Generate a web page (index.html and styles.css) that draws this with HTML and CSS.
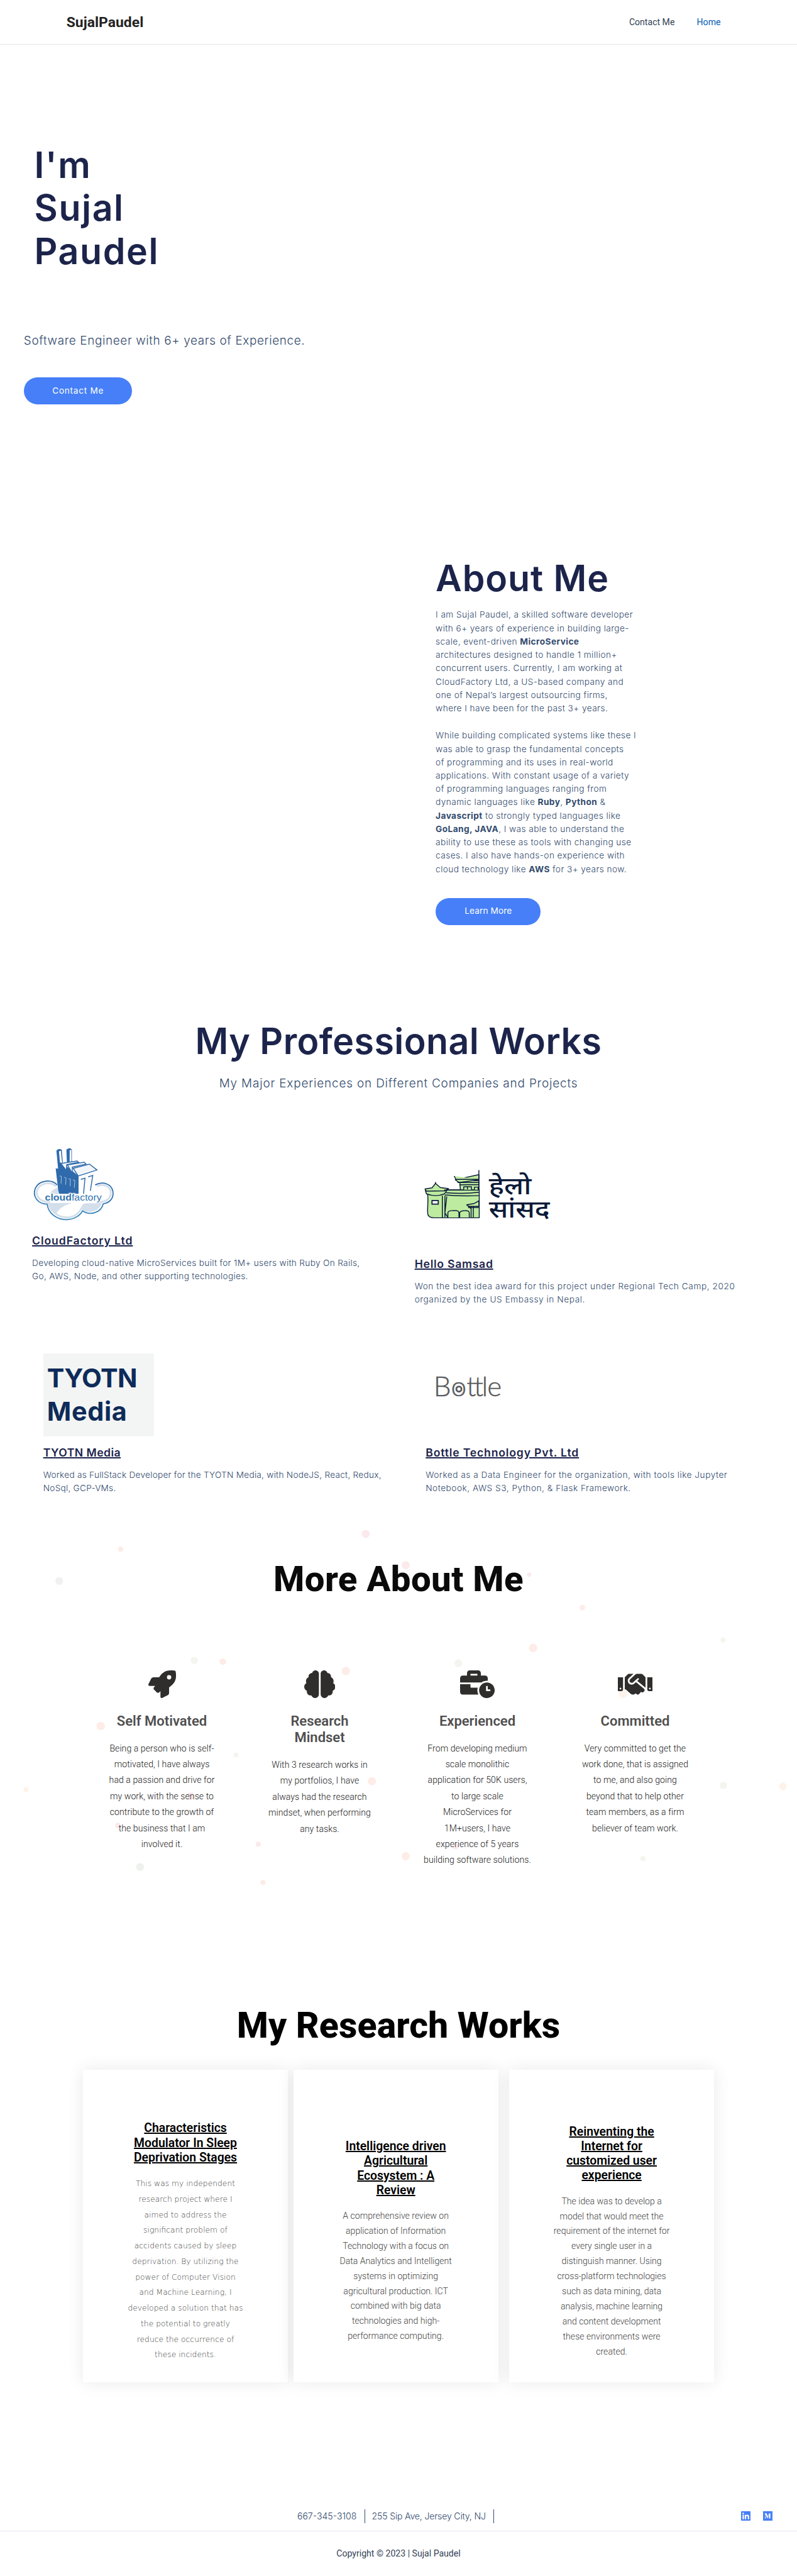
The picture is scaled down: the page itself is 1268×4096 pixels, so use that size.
FILE: index.html
```html
<!DOCTYPE html>
<html lang="en">
<head>
<meta charset="utf-8">
<title>SujalPaudel</title>
<link rel="stylesheet" href="styles.css">
</head>
<body>
<header class="site-header">
  <a class="logo">SujalPaudel</a>
  <nav class="nav"><a>Contact Me</a><a class="current">Home</a></nav>
</header>

<section class="hero">
  <h1 class="display">I'm<br>Sujal<br>Paudel</h1>
  <p class="lead">Software Engineer with 6+ years of Experience.</p>
  <a class="btn btn-contact">Contact Me</a>
</section>

<section class="about">
  <h2 class="display">About Me</h2>
  <p class="copy first">I am Sujal Paudel, a skilled software developer<br>with 6+ years of experience in building large-<br>scale, event-driven <b>MicroService</b><br>architectures designed to handle 1 million+<br>concurrent users. Currently, I am working at<br>CloudFactory Ltd, a US-based company and<br>one of Nepal’s largest outsourcing firms,<br>where I have been for the past 3+ years.</p>
  <p class="copy second">While building complicated systems like these I<br>was able to grasp the fundamental concepts<br>of programming and its uses in real-world<br>applications. With constant usage of a variety<br>of programming languages ranging from<br>dynamic languages like <b>Ruby</b>, <b>Python</b> &amp;<br><b>Javascript</b> to strongly typed languages like<br><b>GoLang, JAVA</b>, I was able to understand the<br>ability to use these as tools with changing use<br>cases. I also have hands-on experience with<br>cloud technology like <b>AWS</b> for 3+ years now.</p>
  <a class="btn btn-learn">Learn More</a>
</section>

<section class="works">
  <h2 class="display">My Professional Works</h2>
  <p class="lead">My Major Experiences on Different Companies and Projects</p>
  <div class="work-row row-one">
    <article class="work work-cloud">
      <svg class="logo-cloud" viewBox="54 36 450 450">
        <defs><linearGradient id="cg" x1="0" y1="0" x2="0" y2="1"><stop offset="0" stop-color="#2d68a8"/><stop offset="1" stop-color="#3f8cc0"/></linearGradient></defs>
        <path d="M190 268C160 236 95 240 72 285C54 330 85 372 136 372C142 425 190 456 240 456C280 456 312 436 328 408C368 436 428 420 440 370C478 364 498 338 492 302C485 264 440 246 396 262V300H190Z" fill="#fff"/>
        <path d="M190 268C160 236 95 240 72 285C54 330 85 372 136 372C142 425 190 456 240 456C280 456 312 436 328 408C368 436 428 420 440 370C478 364 498 338 492 302C485 264 440 246 396 268" fill="none" stroke="url(#cg)" stroke-width="6"/>
        <path d="M185 275C155 250 105 254 84 290C68 325 95 360 146 360C150 410 195 444 240 444C278 444 306 424 322 394C365 424 418 405 428 360C462 356 486 335 480 303C474 274 440 260 404 274" fill="none" stroke="#d3dfeb" stroke-width="10"/>
        <path d="M140 366H272C225 378 195 400 184 428C158 416 144 394 140 366ZM150 318Q165 285 195 285V318ZM330 372C318 385 320 400 335 405C370 418 415 400 425 362C395 375 350 360 330 372Z" fill="#d3dfeb"/>
        <path d="M186 82Q200 68 215 78L221 150L306 220V316H200L196 300L182 178L195 180Z" fill="#2f6bac"/>
        <path d="M240 78Q255 62 270 76V150H243Z" fill="#2f6bac"/>
        <path d="M200 86L210 82L217 150L205 145ZM258 80L267 78V146H258Z" fill="#fff"/>
        <path d="M210 152L298 138L306 145L242 158L240 190ZM246 160L336 145L347 155L272 172L272 205Z" fill="#f5f8fc" stroke="#2f6bac" stroke-width="5"/>
        <path d="M277 178L365 155L406 187L304 220Z" fill="#f2f6fb" stroke="#2f6bac" stroke-width="5"/>
        <path d="M306 222L390 196L376 316H306Z" fill="#fff"/>
        <path d="M318 238L341 232L333 316M358 224L383 217L370 300" fill="none" stroke="#2f6bac" stroke-width="5"/>
        <path d="M204 219L213 222L211 262M228 227L238 230L236 267M252 234L262 237L260 275M275 241L286 244L283 283" fill="none" stroke="#dce8f4" stroke-width="2.5"/>
        <text x="124" y="353" font-size="48" textLength="307" lengthAdjust="spacingAndGlyphs" fill="#3575ae" class="cloud-word"><tspan font-weight="700">cloud</tspan>factory</text>
      </svg>
      <h3>CloudFactory Ltd</h3>
      <p>Developing cloud-native MicroServices built for 1M+ users with Ruby On Rails,<br>Go, AWS, Node, and other supporting technologies.</p>
    </article>
    <article class="work work-samsad">
      <svg class="logo-samsad" viewBox="27 -54 780 576">
        <g fill="#bdeba0" stroke="#0c1b38" stroke-width="5" stroke-linejoin="round">
          <path d="M96 226C102 270 92 310 98 340Q105 356 130 356H376V205H180Q140 245 96 226Z"/>
          <path d="M84 208L90 226Q140 246 188 226L206 200Z"/>
          <path d="M82 200L120 194L139 170L165 192L210 198L190 210L90 212Z"/>
          <path d="M270 155H374V206H274Z"/>
          <path d="M246 150L374 122V150L268 165Z"/>
          <path d="M240 130L250 148H372M258 165H374M268 178L374 176M374 98V205M139 162V172M186 206H376M196 220Q290 228 376 218M190 232Q280 240 376 236M176 236V356M190 236V352M200 240L190 330L208 356"/>
          <path d="M292 204V188H334V204M350 204V190H370V204M312 188V202"/>
          <path d="M120 262H154V282H120Z" fill="#fff" stroke-width="6"/>
          <path d="M206 354V328Q210 316 235 317Q266 314 266 330V354M270 354V328Q275 317 298 317Q322 316 322 330V354"/>
          <path d="M308 286L350 278L374 264V294H320ZM332 296V354M344 296V354M316 300H374M308 286L330 305"/>
        </g>
        <g class="samsad-word" fill="#0c1b38">
          <text x="428" y="230" font-size="132" textLength="230" lengthAdjust="spacingAndGlyphs">हेलो</text>
          <text x="428" y="354" font-size="132" textLength="330" lengthAdjust="spacingAndGlyphs">सांसद</text>
        </g>
      </svg>
      <h3>Hello Samsad</h3>
      <p>Won the best idea award for this project under Regional Tech Camp, 2020<br>organized by the US Embassy in Nepal.</p>
    </article>
  </div>
  <div class="work-row row-two">
    <article class="work work-tyotn">
      <div class="tyotn"><span class="tyotn-name">TYOTN</span><br><span class="tyotn-media">Media</span></div>
      <h3>TYOTN Media</h3>
      <p>Worked as FullStack Developer for the TYOTN Media, with NodeJS, React, Redux,<br>NoSql, GCP-VMs.</p>
    </article>
    <article class="work work-bottle">
      <svg class="logo-bottle" viewBox="0 0 200 150">
        <text x="14.5 46 74 87.5 101.5 111.5" y="77.4" font-size="50" fill="#58595b" class="bottle-word">Bottle</text>
        <circle cx="60.3" cy="64.4" r="4.6" fill="none" stroke="#58595b" stroke-width="3.2"/>
      </svg>
      <h3>Bottle Technology Pvt. Ltd</h3>
      <p>Worked as a Data Engineer for the organization, with tools like Jupyter<br>Notebook, AWS S3, Python, &amp; Flask Framework.</p>
    </article>
  </div>
</section>

<section class="more">
  <svg class="dots" viewBox="0 2740 1440 680">
    <g fill="#fbe9eb"><circle cx="660.6" cy="2769.5" r="7.2"/><circle cx="733" cy="2826" r="7.2"/><circle cx="956" cy="2843" r="4"/><circle cx="812" cy="3113" r="4"/><circle cx="344.4" cy="3243" r="7"/><circle cx="212.8" cy="3296" r="5"/><circle cx="466.6" cy="3329.8" r="4.7"/><circle cx="823" cy="3334" r="5"/></g>
    <g fill="#fdece7"><circle cx="218" cy="2797" r="4.8"/><circle cx="1052" cy="2902.6" r="5"/><circle cx="963" cy="2975.5" r="7.5"/><circle cx="402.5" cy="3000" r="6"/><circle cx="624.7" cy="3017" r="7.3"/><circle cx="182" cy="3116.4" r="7.5"/><circle cx="671.7" cy="3216" r="7.4"/><circle cx="733" cy="3351.5" r="7.3"/><circle cx="475" cy="3399" r="4.8"/></g>
    <g fill="#f3f5ee"><circle cx="1306" cy="2961" r="4.4"/><circle cx="351" cy="2998" r="6.4"/><circle cx="828" cy="3003" r="7"/><circle cx="426.5" cy="3168.5" r="4.2"/><circle cx="1306.7" cy="3223.6" r="6.5"/><circle cx="1161.5" cy="3355.8" r="4.6"/></g>
    <g fill="#eff1ef"><circle cx="107" cy="2854.5" r="7"/><circle cx="253" cy="3371" r="7.2"/></g>
    <g fill="#fef3ea"><circle cx="1125.6" cy="3058" r="8"/><circle cx="1414.4" cy="3225.7" r="7"/><circle cx="47" cy="3231" r="4.5"/></g>
  </svg>
  <h2 class="heavy">More About Me</h2>
  <div class="traits">
    <article class="trait">
      <svg viewBox="0 0 512 512"><path d="M505.12019,19.09375c-1.18945-5.53125-6.65819-11-12.207-12.1875C460.716,0,435.507,0,410.40747,0,307.17523,0,245.26909,55.20312,199.05238,128H94.83772c-16.34763.01562-35.55658,11.875-42.88664,26.48438L2.51562,253.29688A28.4,28.4,0,0,0,0,264a24.00867,24.00867,0,0,0,24.00582,24H127.81618l-22.47457,22.46875c-11.36521,11.36133-12.99607,32.25781,0,45.25L156.24582,406.625c11.15623,11.1875,32.15619,13.15625,45.27726,0l22.47457-22.46875V488a24.00867,24.00867,0,0,0,24.00581,24,28.55934,28.55934,0,0,0,10.707-2.51562l98.72834-49.39063c14.62888-7.29687,26.50776-26.5,26.50776-42.85937V312.79688c72.59753-46.3125,128.03493-108.40626,128.03493-211.09376C512.07526,76.5,512.07526,51.29688,505.12019,19.09375ZM384.04033,168A40,40,0,1,1,424.05,128,40.02322,40.02322,0,0,1,384.04033,168Z"/></svg>
      <h3>Self Motivated</h3>
      <p>Being a person who is self-<br>motivated, I have always<br>had a passion and drive for<br>my work, with the sense to<br>contribute to the growth of<br>the business that I am<br>involved it.</p>
    </article>
    <article class="trait">
      <svg viewBox="0 0 576 512"><path d="M208 0c-29.9 0-54.7 20.5-61.8 48.2-.8 0-1.4-.2-2.2-.2-35.3 0-64 28.7-64 64 0 4.8.6 9.5 1.7 14C52.5 138 32 166.6 32 200c0 12.6 3.2 24.3 8.3 34.9C16.3 248.7 0 274.3 0 304c0 33.3 20.4 61.9 49.4 73.9-.9 4.6-1.4 9.3-1.4 14.1 0 39.8 32.2 72 72 72 4.1 0 8.1-.5 12-1.2 9.6 28.5 36.2 49.2 68 49.2 39.8 0 72-32.2 72-72V64c0-35.3-28.7-64-64-64zm368 304c0-29.7-16.3-55.3-40.3-69.1 5.2-10.6 8.3-22.3 8.3-34.9 0-33.4-20.5-62-49.7-74 1-4.5 1.7-9.2 1.7-14 0-35.3-28.7-64-64-64-.8 0-1.5.2-2.2.2C422.7 20.5 397.9 0 368 0c-35.3 0-64 28.6-64 64v376c0 39.8 32.2 72 72 72 31.8 0 58.4-20.7 68-49.2 3.9.7 7.9 1.2 12 1.2 39.8 0 72-32.2 72-72 0-4.8-.5-9.5-1.4-14.1 29-12 49.4-40.6 49.4-73.9z"/></svg>
      <h3>Research<br>Mindset</h3>
      <p>With 3 research works in<br>my portfolios, I have<br>always had the research<br>mindset, when performing<br>any tasks.</p>
    </article>
    <article class="trait">
      <svg viewBox="0 0 640 512"><path d="M496 224c-79.59 0-144 64.41-144 144s64.41 144 144 144 144-64.41 144-144-64.41-144-144-144zm64 150.29c0 5.34-4.37 9.71-9.71 9.71h-60.57c-5.34 0-9.71-4.37-9.71-9.71v-76.57c0-5.34 4.37-9.71 9.71-9.71h12.57c5.34 0 9.71 4.37 9.71 9.71V352h38.29c5.34 0 9.71 4.37 9.71 9.71v12.58zM496 192c5.4 0 10.72.33 16 .81V144c0-25.6-22.4-48-48-48h-80V48c0-25.6-22.4-48-48-48H176c-25.6 0-48 22.4-48 48v48H48c-25.6 0-48 22.4-48 48v80h395.12c28.6-20.09 63.35-32 100.88-32zM320 96H192V64h128v32zm6.82 224H208c-8.84 0-16-7.16-16-16v-48H0v144c0 25.6 22.4 48 48 48h291.43C327.1 423.96 320 396.82 320 368c0-16.66 2.48-32.72 6.82-48z"/></svg>
      <h3>Experienced</h3>
      <p>From developing medium<br>scale monolithic<br>application for 50K users,<br>to large scale<br>MicroServices for<br>1M+users, I have<br>experience of 5 years<br>building software solutions.</p>
    </article>
    <article class="trait">
      <svg viewBox="0 0 640 512"><path d="M434.7 64h-85.9c-8 0-15.7 3-21.6 8.4l-98.3 90c-.1.1-.2.3-.3.4-16.6 15.6-16.3 40.5-2.1 56 12.7 13.9 39.4 17.6 56.1 2.7.1-.1.3-.1.4-.2l79.9-73.2c6.5-5.9 16.7-5.5 22.6 1 6 6.5 5.5 16.6-1 22.6l-26.1 23.9L504 313.8c2.9 2.4 5.5 5 7.9 7.7V128l-54.6-54.6c-5.9-6-14.1-9.4-22.6-9.4zM544 128.2v223.9c0 17.7 14.3 32 32 32h64V128.2h-96zm48 223.9c-8.8 0-16-7.2-16-16s7.2-16 16-16 16 7.2 16 16-7.2 16-16 16zM0 384h64c17.7 0 32-14.3 32-32V128.2H0V384zm48-63.9c8.8 0 16 7.2 16 16s-7.2 16-16 16-16-7.2-16-16c0-8.9 7.2-16 16-16zm435.9 18.6L334.6 217.5l-30 27.5c-29.7 27.1-75.2 24.5-101.7-4.4-26.9-29.4-24.8-74.9 4.4-101.7L289.1 64h-83.8c-8.5 0-16.6 3.4-22.6 9.4L128 128v223.9h18.3l90.5 81.9c27.4 22.3 67.7 18.1 90-9.3l.2-.2 17.9 15.5c15.9 13 39.4 10.5 52.3-5.4l31.4-38.6 5.4 4.4c13.7 11.1 33.9 9.1 45-4.7l9.5-11.7c11.2-13.8 9.1-33.9-4.6-45.1z"/></svg>
      <h3>Committed</h3>
      <p>Very committed to get the<br>work done, that is assigned<br>to me, and also going<br>beyond that to help other<br>team members, as a firm<br>believer of team work.</p>
    </article>
  </div>
</section>

<section class="research">
  <h2 class="heavy">My Research Works</h2>
  <div class="papers">
    <article class="paper paper-sleep">
      <h3>Characteristics<br>Modulator In Sleep<br>Deprivation Stages</h3>
      <p>This was my independent<br>research project where I<br>aimed to address the<br>significant problem of<br>accidents caused by sleep<br>deprivation. By utilizing the<br>power of Computer Vision<br>and Machine Learning, I<br>developed a solution that has<br>the potential to greatly<br>reduce the occurrence of<br>these incidents.</p>
    </article>
    <article class="paper paper-agri">
      <h3>Intelligence driven<br>Agricultural<br>Ecosystem : A<br>Review</h3>
      <p>A comprehensive review on<br>application of Information<br>Technology with a focus on<br>Data Analytics and Intelligent<br>systems in optimizing<br>agricultural production. ICT<br>combined with big data<br>technologies and high-<br>performance computing.</p>
    </article>
    <article class="paper paper-net">
      <h3>Reinventing the<br>Internet for<br>customized user<br>experience</h3>
      <p>The idea was to develop a<br>model that would meet the<br>requirement of the internet for<br>every single user in a<br>distinguish manner. Using<br>cross-platform technologies<br>such as data mining, data<br>analysis, machine learning<br>and content development<br>these environments were<br>created.</p>
    </article>
  </div>
</section>

<footer class="site-footer">
  <div class="contact-row">
    <ul class="contact-list"><li>667-345-3108</li><li class="address">255 Sip Ave, Jersey City, NJ</li></ul>
    <div class="social">
      <svg viewBox="0 32 448 448"><path d="M416 32H31.9C14.3 32 0 46.5 0 64.3v383.4C0 465.5 14.3 480 31.9 480H416c17.6 0 32-14.5 32-32.3V64.3c0-17.8-14.4-32.3-32-32.3zM135.4 416H69V202.2h66.5V416zm-33.2-243c-21.3 0-38.5-17.3-38.5-38.5S80.9 96 102.2 96c21.2 0 38.5 17.3 38.5 38.5 0 21.3-17.2 38.5-38.5 38.5zm282.1 243h-66.4V312c0-24.8-.5-56.7-34.5-56.7-34.6 0-39.9 27-39.9 54.9V416h-66.4V202.2h63.7v29.2h.9c8.9-16.8 30.6-34.5 62.9-34.5 67.2 0 79.7 44.3 79.7 101.9V416z"/></svg>
      <svg viewBox="0 32 448 448"><path d="M0 32v448h448V32H0zm372.2 106.1l-24 23c-2.1 1.6-3.1 4.2-2.7 6.7v169.3c-.4 2.6.6 5.2 2.7 6.7l23.5 23v5.1h-118V367l24.3-23.6c2.4-2.4 2.4-3.1 2.4-6.7V199.8l-67.6 171.6h-9.1L125 199.8v115c-.7 4.8 1 9.7 4.4 13.2l31.6 38.3v5.1H71.2v-5.1l31.6-38.3c3.4-3.5 4.9-8.4 4.1-13.2v-133c.4-3.7-1-7.3-3.8-9.8L75 138.1V133h87.3l67.4 148L289 133.1h83.2v5z"/></svg>
    </div>
  </div>
  <p class="copyright">Copyright © 2023 | Sujal Paudel</p>
</footer>
</body>
</html>
```
FILE: styles.css
```css
/* 1rem is ten design pixels at the page's scale */
html { font-size: 8.807px; }
* { box-sizing: border-box; margin: 0; padding: 0; }
body { background: #fff; color: #334155; font-family: Roboto, sans-serif; white-space: nowrap; overflow-x: hidden; }

.site-header { height: 8.1rem; padding: 0 13.8rem 0 12rem; border-bottom: 1px solid #e6e6e8; display: flex; align-items: center; justify-content: space-between; }
.logo { font-size: 2.6rem; font-weight: 700; color: #222; letter-spacing: .002em; }
.nav { display: flex; gap: 4rem; font-size: 1.6rem; }
.nav .current { color: #045cb4; }

.display { font: 600 6.5rem/7.8rem Inter, sans-serif; color: #1c244b; }
.lead { font: 300 2.15rem/3rem Inter, sans-serif; color: #324a6d; }
.copy, .work p { font: 300 1.55rem/2.407rem Inter, sans-serif; color: #324a6d; }
.copy { letter-spacing: .032em; }
.copy b { font-weight: 700; }
.btn { display: flex; align-items: center; justify-content: center; height: 4.9rem; border-radius: 2.45rem; background: #467ff7; color: #fff; font: 400 1.55rem/1 Inter, sans-serif; }

.hero { height: 81.9rem; padding: 17.86rem 4.3rem 0; }
.hero .display { margin-left: 1.9rem; letter-spacing: .028em; }
.hero .lead { margin: 10.7rem 0 5.1rem; letter-spacing: .0326em; }
.btn-contact { width: 19.6rem; letter-spacing: .052em; }

.about { height: 86rem; padding: 10.57rem 0 0 78.7rem; }
.about .display { letter-spacing: .016em; }
.first { margin-top: 1.49rem; }
.second { margin: 2.54rem 0 3.98rem; }
.btn-learn { width: 19rem; letter-spacing: .006em; }

.works { height: 98rem; padding-top: 8.2rem; }
.works > .display, .works > .lead { text-align: center; }
.works > .display { letter-spacing: .008em; }
.works > .lead { margin-top: 2.2rem; letter-spacing: .0437em; }
.work-row { display: grid; grid-template-columns: 69.1rem 1fr; }
.row-one { margin-top: 9rem; padding-left: 5.8rem; height: 29.8rem; }
.row-two { margin-top: 8.4rem; padding-left: 7.8rem; }
.work svg { display: block; }
.work h3 { margin: 1.6rem 0 1.7rem; font: 600 2rem/2.4rem Inter, sans-serif; color: #1c244b; text-decoration: underline; text-decoration-thickness: 2px; }
.work-cloud h3 { letter-spacing: .051em; }
.work-cloud p { letter-spacing: .024em; }
.work-samsad h3 { letter-spacing: .042em; }
.work-samsad p { letter-spacing: .042em; }
.work-tyotn h3 { letter-spacing: .025em; }
.work-tyotn p { letter-spacing: .0186em; }
.work-bottle h3 { letter-spacing: .0467em; }
.work-bottle p { letter-spacing: .0377em; }
.logo-cloud { width: 15rem; height: 15rem; }
.cloud-word { font-family: "Liberation Sans", sans-serif; paint-order: stroke; stroke: #fff; stroke-width: 8px; }
.logo-samsad { width: 26rem; height: 19.2rem; }
.samsad-word { font-family: "Noto Sans Devanagari", "Noto Sans", FreeSans, sans-serif; font-weight: 500; }
.tyotn { width: 20rem; height: 15rem; padding: 1.4rem 0 0 .7rem; background: #f3f5f4; color: #0e2b59; font: 700 4.7rem/6.07rem Inter, sans-serif; }
.tyotn-name { letter-spacing: -.015em; }
.tyotn-media { letter-spacing: .015em; }
.logo-bottle { width: 20rem; height: 15rem; }
.bottle-word { font-family: Lato, sans-serif; font-weight: 300; stroke: #58595b; stroke-width: .5px; }

.more { position: relative; height: 84rem; padding-top: 7.37rem; }
.dots { position: absolute; left: 0; top: 0; width: 144rem; height: 68rem; z-index: -1; }
.heavy { text-align: center; font: 800 6.4rem/7.6rem Roboto, sans-serif; color: #0a0a0a; letter-spacing: .007em; }
.traits { display: grid; grid-template-columns: repeat(4, 28.5rem); justify-content: center; margin-top: 12.6rem; text-align: center; }
.trait svg { display: block; height: 5rem; margin: 0 auto 2.72rem; fill: #2f2e2d; }
.trait h3 { font: 600 2.5rem/3rem Roboto, sans-serif; color: #4f4f4f; }
.trait p { margin-top: 1.97rem; font: 300 1.6rem/2.885rem Roboto, sans-serif; color: #222; letter-spacing: .004em; }

.research { height: 90rem; padding-top: 3.88rem; }
.research .heavy { font-size: 6.5rem; line-height: 7.8rem; color: #000; letter-spacing: .002em; }
.papers { display: grid; grid-template-columns: 37rem 37rem 37rem; column-gap: 1rem; margin: 4.04rem 0 0 15rem; text-align: center; }
.paper { height: 56.35rem; background: #fff; box-shadow: 0 0 3rem rgba(0, 0, 0, .09); }
.paper h3 { font: 600 2.2rem/2.64rem Roboto, sans-serif; color: #000; text-decoration: underline; text-decoration-thickness: 2px; }
.paper p { margin-top: 2.04rem; font: 300 1.6rem/2.715rem Roboto, sans-serif; color: #444; }
.paper-sleep { padding-top: 9.21rem; }
.paper-sleep p { font: 200 1.4rem/2.81rem "DejaVu Sans", sans-serif; }
.paper-agri { padding-top: 12.46rem; }
.paper-net { padding-top: 9.81rem; margin-left: 1rem; margin-right: -1rem; }

.site-footer { height: 17rem; padding-top: 5.1rem; }
.contact-row { display: flex; justify-content: space-between; align-items: center; height: 2.4rem; padding: 0 4.4rem 0 53.7rem; }
.contact-list { display: flex; list-style: none; font: 300 1.6rem/2.4rem Inter, sans-serif; color: #324a6d; }
.contact-list li { padding-right: 1.4rem; margin-right: 1.25rem; border-right: 1px solid #324a6d; }
.contact-list .address { letter-spacing: -.0125em; }
.social { display: flex; gap: 2.3rem; }
.social svg { width: 1.7rem; height: 1.7rem; fill: #467ff7; }
.copyright { margin-top: 1.4rem; border-top: 1px solid #dfe5ee; text-align: center; font-size: 1.6rem; line-height: 8rem; }
```
